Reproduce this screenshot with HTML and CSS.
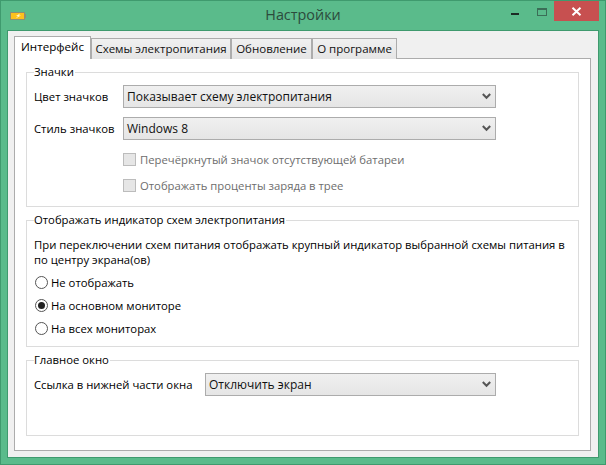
FILE: index.html
```html
<!DOCTYPE html>
<html lang="ru">
<head>
<meta charset="utf-8">
<title>Настройки</title>
<link rel="stylesheet" href="styles.css">
</head>
<body>
<div class="window">
  <header class="titlebar">
    <svg class="app-icon" width="16" height="8" viewBox="0 0 16 8"><rect x="0" y="0" width="15" height="8" fill="#8f8f70"/><rect x="15" y="2" width="1" height="4" fill="#8f8f70"/><rect x="1" y="1" width="13" height="6" fill="#fcc11d"/><path d="M10 1.5 6 4h2L5.5 6.5 11 3.5H9z" fill="#fff6cf"/></svg>
    <h1 class="title">Настройки</h1>
    <div class="controls">
      <div class="ctl"><span class="min"></span></div>
      <div class="ctl"><span class="max"></span></div>
      <div class="close"><svg width="11" height="9" viewBox="0 0 11 9"><path d="M1.5 .8 9.5 8.2M9.5 .8 1.5 8.2" stroke="#fff" stroke-width="2" fill="none"/></svg></div>
    </div>
  </header>
  <main class="client">
    <nav class="tabs">
      <div class="tab active">Интерфейс</div>
      <div class="tab w1">Схемы электропитания</div>
      <div class="tab w2">Обновление</div>
      <div class="tab w3">О программе</div>
    </nav>
    <section class="pane">
      <div class="group g1">
        <div class="legend">Значки</div>
        <div class="row"><label class="lbl">Цвет значков</label><div class="select"><span>Показывает схему электропитания</span><svg class="chev" width="9" height="7" viewBox="0 0 9 7"><path d="M.8 1 4.5 4.8 8.2 1" stroke="#555" stroke-width="2" fill="none"/></svg></div></div>
        <div class="row r2"><label class="lbl">Стиль значков</label><div class="select"><span>Windows 8</span><svg class="chev" width="9" height="7" viewBox="0 0 9 7"><path d="M.8 1 4.5 4.8 8.2 1" stroke="#555" stroke-width="2" fill="none"/></svg></div></div>
        <div class="check"><span class="box"></span><span>Перечёркнутый значок отсутствующей батареи</span></div>
        <div class="check"><span class="box"></span><span>Отображать проценты заряда в трее</span></div>
      </div>
      <div class="group g2">
        <div class="legend">Отображать индикатор схем электропитания</div>
        <p class="desc">При переключении схем питания отображать крупный индикатор выбранной схемы питания в по центру экрана(ов)</p>
        <div class="radio"><span class="dot"></span><span>Не отображать</span></div>
        <div class="radio"><span class="dot on"></span><span>На основном мониторе</span></div>
        <div class="radio"><span class="dot"></span><span>На всех мониторах</span></div>
      </div>
      <div class="group g3">
        <div class="legend">Главное окно</div>
        <div class="row"><label class="lbl wide">Ссылка в нижней части окна</label><div class="select"><span>Отключить экран</span><svg class="chev" width="9" height="7" viewBox="0 0 9 7"><path d="M.8 1 4.5 4.8 8.2 1" stroke="#555" stroke-width="2" fill="none"/></svg></div></div>
      </div>
    </section>
  </main>
</div>
</body>
</html>
```
FILE: styles.css
```css
* { box-sizing: border-box; }
html, body { margin: 0; height: 100%; }
body { width: 606px; height: 465px; overflow: hidden; font-family: "Open Sans", "Noto Sans", sans-serif; font-size: 11.3px; color: #000; }
.window { width: 606px; height: 465px; background: #5abb8b; border: 1px solid #3f9a6e; display: flex; flex-direction: column; }
.titlebar { height: 29px; display: flex; align-items: flex-start; position: relative; flex: none; }
.app-icon { margin: 11px 0 0 9px; }
.title { position: absolute; left: 0; right: 0; top: 3px; margin: 0; text-align: center; font-weight: 400; font-size: 14.4px; line-height: 22px; color: #2c4a3c; }
.controls { margin-left: auto; display: flex; margin-right: 6px; }
.ctl { height: 20px; position: relative; width: 26px; }
.ctl + .ctl { width: 18px; }
.min { position: absolute; left: 1px; top: 12px; width: 8px; height: 2px; background: #1c2b24; }
.max { position: absolute; left: 1px; top: 7px; width: 10px; height: 8px; border: 1px solid #3b6e57; border-top-width: 2px; }
.close { width: 45px; height: 20px; background: #c75050; display: flex; align-items: center; justify-content: center; }
.client { flex: 1; margin: 0 6px 6px 6px; border: 1px solid #3f9a6e; background: #f0f0f0; padding: 5px 7px 6px 6px; display: flex; flex-direction: column; min-height: 0; }
.tabs { display: flex; height: 23px; align-items: flex-end; flex: none; position: relative; z-index: 1; }
.tab { height: 21px; line-height: 19px; text-align: center; background: linear-gradient(#f0f0f0,#e5e5e5); border: 1px solid #acacac; border-bottom: 0; white-space: nowrap; color: #111; font-size: 11.5px; }
.tab.active { height: 23px; width: 77px; background: #fff; line-height: 20px; font-size: 11.6px; color: #000; }
.tab.w1 { width: 140px; }
.tab.w2 { width: 81px; }
.tab.w3 { width: 85px; }
.pane { flex: 1; margin-top: -1px; background: #fff; border: 1px solid #acacac; padding: 13px 11px 14px 11px; display: flex; flex-direction: column; }
.group { border: 1px solid #dcdcdc; position: relative; flex: none; padding-left: 7px; }
.legend { position: absolute; left: 7px; top: -9px; background: #fff; padding: 0 1px 0 0; line-height: 16px; }
.g1 { height: 135px; padding-top: 12px; }
.g2 { height: 127px; margin-top: 13px; padding-top: 16px; }
.g3 { height: 76px; margin-top: 13px; padding-top: 12px; }
.row { display: flex; align-items: center; height: 23px; }
.r2 { margin-top: 9px; }
.lbl { width: 89px; flex: none; }
.lbl.wide { width: 171px; }
.select { width: 373px; height: 23px; border: 1px solid #acacac; background: linear-gradient(#f0f0f0, #e5e5e5); display: flex; align-items: center; justify-content: space-between; padding: 0 4px 0 3px; color: #111; font-size: 12px; }
.g3 .select { width: 291px; }
.chev { flex: none; }
.check { display: flex; align-items: center; margin-left: 89px; margin-top: 13px; height: 13px; color: #6d6d6d; gap: 4px; }
.box { width: 13px; height: 13px; border: 1px solid #bcbcbc; background: #e6e6e6; flex: none; }
.desc { margin: 0 0 4px; line-height: 15px; width: 540px; }
.radio { display: flex; align-items: center; height: 23px; gap: 3px; }
.dot { width: 13px; height: 13px; border-radius: 50%; border: 1px solid #555; background: #fff; flex: none; position: relative; margin-left: 1px; }
.dot.on::after { content: ""; position: absolute; left: 2px; top: 2px; width: 7px; height: 7px; border-radius: 50%; background: #222; }
```
